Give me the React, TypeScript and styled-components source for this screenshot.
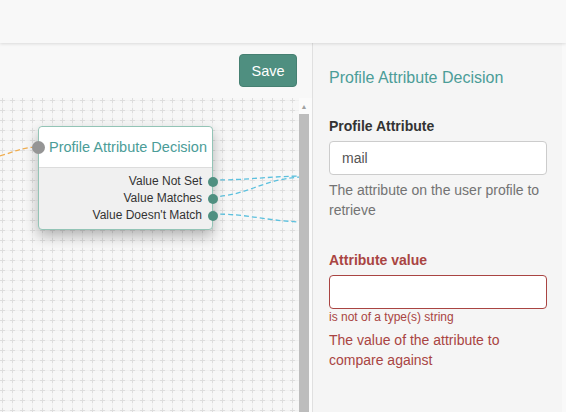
import React from "react";
import styled, { createGlobalStyle } from "styled-components";

const Global = createGlobalStyle`
  html, body { margin: 0; padding: 0; }
  body {
    font-family: "Liberation Sans", Arial, sans-serif;
    font-size: 14px;
    color: #333;
    background: #f8f8f8;
    overflow: hidden;
  }
  * { box-sizing: border-box; }
`;

const Page = styled.div`
  width: 566px;
  height: 412px;
  display: flex;
  flex-direction: column;
  background: #f8f8f8;
`;

const TopBar = styled.div`
  height: 43px;
  flex: none;
  background: #f8f8f8;
  box-shadow: 0 1px 3px rgba(0, 0, 0, 0.12);
  position: relative;
  z-index: 2;
`;

const Main = styled.div`
  flex: 1;
  display: flex;
  min-height: 0;
`;

const LeftPane = styled.div`
  width: 313px;
  flex: none;
  display: flex;
  flex-direction: column;
  border-right: 1px solid #e0e0e0;
`;

const Toolbar = styled.div`
  height: 55px;
  flex: none;
  display: flex;
  justify-content: flex-end;
  align-items: flex-start;
  padding: 11px 15px 0 0;
  background: #f8f8f8;
`;

const Button = styled.button`
  width: 58px;
  height: 33px;
  border: 1px solid #468072;
  border-radius: 4px;
  background: #4f8f80;
  color: #fff;
  font-family: "Liberation Sans", Arial, sans-serif;
  font-size: 14.5px;
  padding: 0;
`;

const CanvasRow = styled.div`
  flex: 1;
  display: flex;
  min-height: 0;
`;

const Canvas = styled.div`
  position: relative;
  flex: 1;
  overflow: hidden;
  background: #f7f7f7;
`;

const Layer = styled.svg`
  position: absolute;
  left: 0;
  top: 0;
  width: 100%;
  height: 100%;
`;

const ScrollTrack = styled.div`
  width: 13px;
  flex: none;
  display: flex;
  flex-direction: column;
  background: #fbfbfb;
  padding-right: 3px;
`;

const ScrollArrow = styled.div`
  height: 16px;
  display: flex;
  justify-content: center;
  align-items: center;
  font-size: 7px;
  color: #a0a0a0;
  line-height: 1;
`;

const ScrollThumb = styled.div`
  flex: 1;
  background: #bdbdbd;
`;

const Node = styled.div`
  position: absolute;
  width: 175px;
  border: 1px solid #93c4b6;
  border-radius: 4px;
  background: #f0f0f0;
  box-shadow: 0 6px 14px rgba(0, 0, 0, 0.28);
`;

const NodeHeader = styled.div`
  height: 41px;
  background: #fff;
  border-bottom: 1px solid #dcdcdc;
  border-radius: 4px 4px 0 0;
  display: flex;
  align-items: center;
  padding-left: 10px;
  font-size: 14.5px;
  color: #4b9d98;
  position: relative;
`;

const NodeBody = styled.div`
  padding: 5px 0 5px;
  display: flex;
  flex-direction: column;
  align-items: flex-end;
`;

const Output = styled.div`
  position: relative;
  height: 17px;
  line-height: 17px;
  font-size: 12px;
  color: #333;
  padding-right: 10px;
`;

const Port = styled.span<{ $color: string }>`
  position: absolute;
  border-radius: 50%;
  background: ${(p) => p.$color};
  top: 50%;
`;

const InPort = styled(Port)`
  width: 13px;
  height: 13px;
  margin-top: -6.5px;
  left: -7px;
`;

const OutPort = styled(Port)`
  width: 10px;
  height: 10px;
  margin-top: -5px;
  right: -6px;
`;

const Panel = styled.div`
  flex: 1;
  background: #f5f5f5;
  padding: 25px 15px 0 16px;
  border-right: 4px solid #f9f9f9;
`;

const PanelTitle = styled.h3`
  margin: 0 0 28px;
  font-size: 16px;
  font-weight: normal;
  color: #4b9d98;
  line-height: 20px;
`;

const Field = styled.div<{ $error?: boolean }>`
  margin-bottom: 30px;
  color: ${(p) => (p.$error ? "#a94442" : "#333")};
`;

const Label = styled.label`
  display: block;
  font-weight: bold;
  font-size: 14px;
  line-height: 20px;
  margin-bottom: 5px;
`;

const Input = styled.div<{ $error?: boolean }>`
  height: 34px;
  border: 1px solid ${(p) => (p.$error ? "#a94442" : "#ccc")};
  border-radius: 4px;
  background: #fff;
  padding: 0 12px;
  display: flex;
  align-items: center;
  font-size: 14px;
  color: #555;
`;

const ErrorText = styled.div`
  font-size: 12px;
  line-height: 17px;
  margin-top: 0;
`;

const Help = styled.div<{ $error?: boolean }>`
  margin-top: ${(p) => (p.$error ? "4px" : "5px")};
  font-size: 14px;
  line-height: 20px;
  color: ${(p) => (p.$error ? "#a94442" : "#737373")};
`;

export default function App() {
  return (
    <Page>
      <Global />
      <TopBar />
      <Main>
        <LeftPane>
          <Toolbar>
            <Button>Save</Button>
          </Toolbar>
          <CanvasRow>
            <Canvas>
              <Layer>
                <defs>
                  <pattern id="grid" width="10" height="10" patternUnits="userSpaceOnUse" x="2" y="2">
                    <path d="M0.5 0 V10 M0 0.5 H10" stroke="#f0f0f0" strokeWidth="1" fill="none" />
                    <path d="M0.5 -2 V3 M0.5 8 V12 M-2 0.5 H3 M8 0.5 H12" stroke="#dddddd" strokeWidth="1" fill="none" />
                  </pattern>
                </defs>
                <rect width="100%" height="100%" fill="url(#grid)" />
                <path d="M0 58 C 14 54, 22 49, 38 49" stroke="#f0ad4e" strokeWidth="1.3" strokeDasharray="5 3" fill="none" />
                <path d="M212 82 C 250 82, 260 79, 300 78" stroke="#5bc0de" strokeWidth="1.3" strokeDasharray="5 3" fill="none" />
                <path d="M212 99 C 250 97, 260 82, 300 79" stroke="#5bc0de" strokeWidth="1.3" strokeDasharray="5 3" fill="none" />
                <path d="M212 116 C 250 116, 260 122, 300 124" stroke="#5bc0de" strokeWidth="1.3" strokeDasharray="5 3" fill="none" />
              </Layer>
              <Node style={{ left: 38, top: 28 }}>
                <NodeHeader>
                  <InPort $color="#959595" />
                  Profile Attribute Decision
                </NodeHeader>
                <NodeBody>
                  <Output>
                    Value Not Set
                    <OutPort $color="#4f8f80" />
                  </Output>
                  <Output>
                    Value Matches
                    <OutPort $color="#4f8f80" />
                  </Output>
                  <Output>
                    Value Doesn't Match
                    <OutPort $color="#4f8f80" />
                  </Output>
                </NodeBody>
              </Node>
            </Canvas>
            <ScrollTrack>
              <ScrollArrow>▲</ScrollArrow>
              <ScrollThumb />
            </ScrollTrack>
          </CanvasRow>
        </LeftPane>
        <Panel>
          <PanelTitle>Profile Attribute Decision</PanelTitle>
          <Field>
            <Label>Profile Attribute</Label>
            <Input>mail</Input>
            <Help>The attribute on the user profile to retrieve</Help>
          </Field>
          <Field $error>
            <Label>Attribute value</Label>
            <Input $error />
            <ErrorText>is not of a type(s) string</ErrorText>
            <Help $error>The value of the attribute to compare against</Help>
          </Field>
        </Panel>
      </Main>
    </Page>
  );
}
